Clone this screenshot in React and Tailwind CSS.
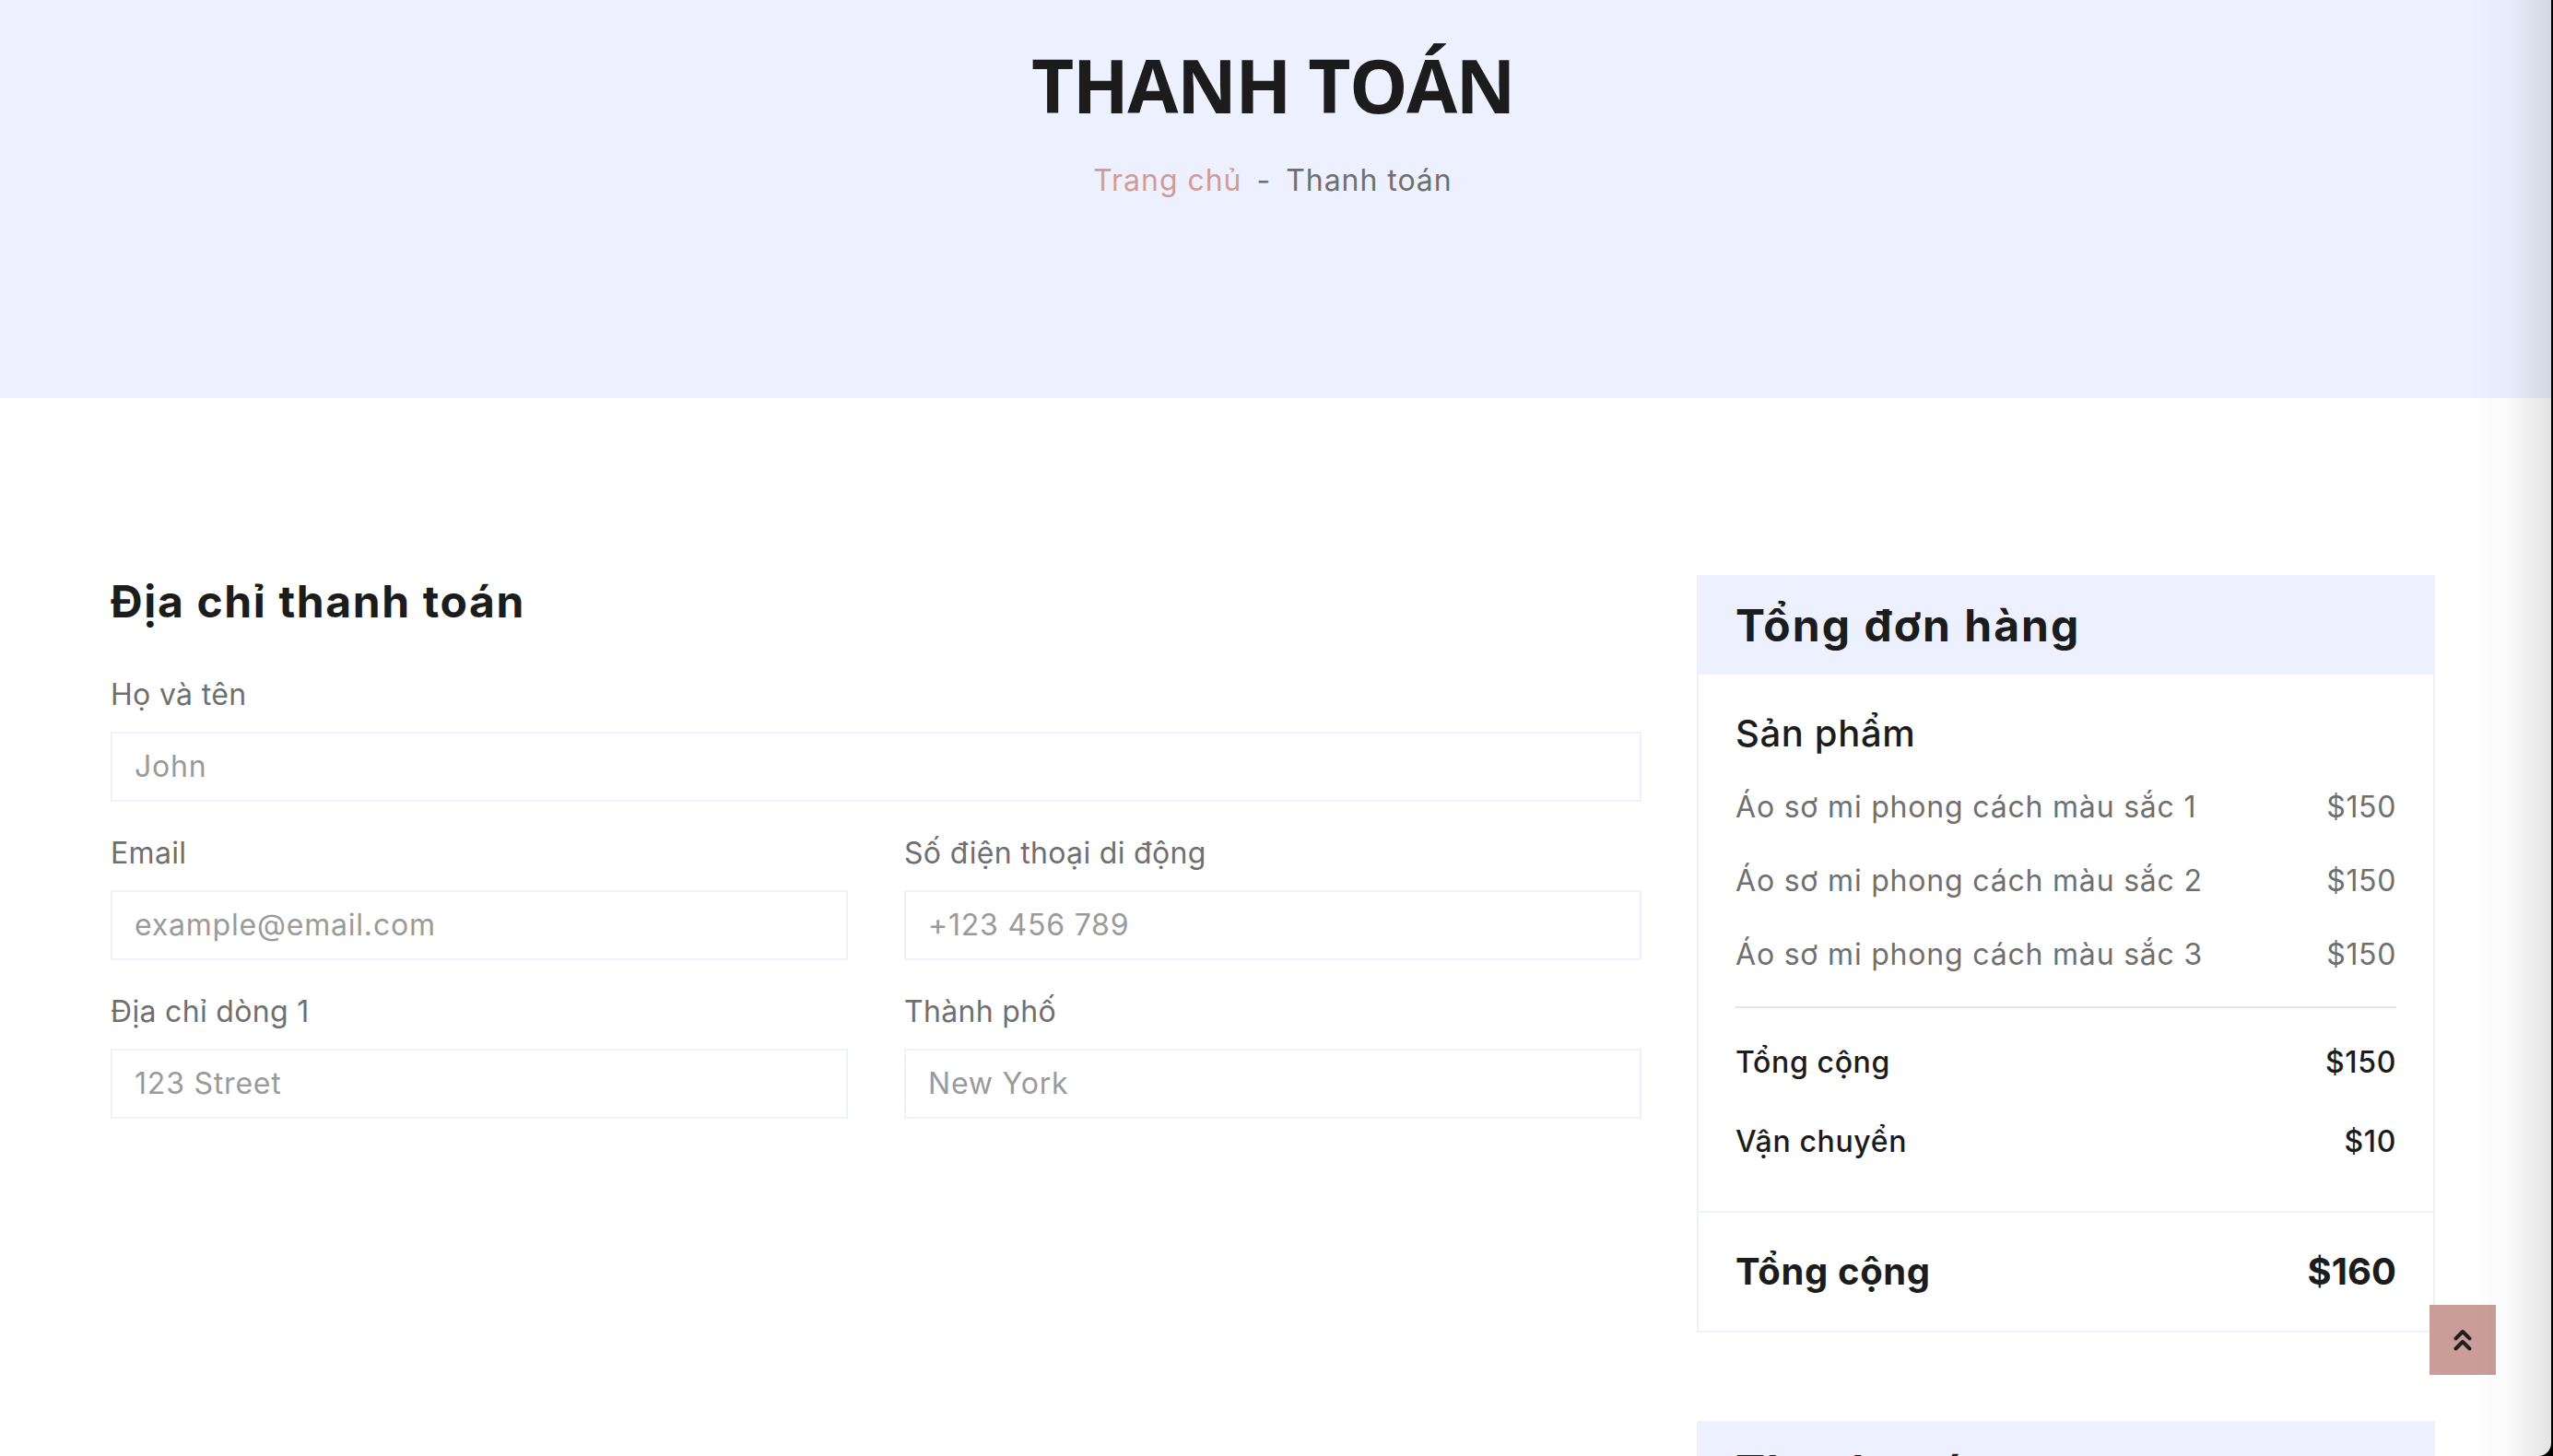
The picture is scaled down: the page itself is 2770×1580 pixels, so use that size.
import React from "react";

function Field({ label, placeholder, wide }) {
  return (
    <div className={wide ? "col-span-2" : ""}>
      <label className="block mb-[16px] leading-[48px] tracking-[0.01em]">{label}</label>
      <input
        type="text"
        placeholder={placeholder}
        className="block w-full h-[76px] border-2 border-[#EDF1FF] bg-white px-[24px] text-[32px] leading-[48px] tracking-[0.025em] text-[#495057] placeholder:text-[#9A9A9A] outline-none"
      />
    </div>
  );
}

function AngleDoubleUp() {
  return (
    <svg width="20" height="25" viewBox="0 0 20 25" fill="none">
      <polyline points="2.5,10.5 10,3 17.5,10.5" stroke="#1F1F1F" strokeWidth="4" strokeLinecap="round" strokeLinejoin="round" />
      <polyline points="2.5,21.5 10,14 17.5,21.5" stroke="#1F1F1F" strokeWidth="4" strokeLinecap="round" strokeLinejoin="round" />
    </svg>
  );
}

const items = [
  "Áo sơ mi phong cách màu sắc 1",
  "Áo sơ mi phong cách màu sắc 2",
  "Áo sơ mi phong cách màu sắc 3",
];

export default function App() {
  return (
    <div className="w-[2770px] h-[1580px] bg-black overflow-hidden">
      <div className="relative w-[2768px] h-[1580px] bg-white rounded-br-[14px] overflow-hidden font-['Inter','Open_Sans',sans-serif] text-[32px] leading-[1.5] tracking-[0.02em] text-[#6F6F6F]">
        <header className="h-[432px] bg-[#EDF1FF] pt-[44px] pl-[120px] pr-[126px] flex flex-col items-center">
          <h1 className="text-[80px] leading-[96px] font-bold tracking-[-0.02em] text-[#1C1C1C] mb-[32px] font-['Open_Sans',sans-serif]">
            THANH TOÁN
          </h1>
          <div className="flex leading-[48px] tracking-[0.03em]">
            <a href="#" className="text-[#D19C97]">Trang chủ</a>
            <span className="px-[16px]">-</span>
            <span>Thanh toán</span>
          </div>
        </header>

        <main className="pt-[192px] pl-[120px] pr-[126px] grid grid-cols-[1661px_801px] gap-x-[60px] items-start">
          <section>
            <h4 className="text-[48px] leading-[57.6px] font-bold tracking-[0.034em] text-[#1C1C1C] mb-[48px]">
              Địa chỉ thanh toán
            </h4>
            <div className="grid grid-cols-2 gap-x-[61px] gap-y-[32px]">
              <Field wide label="Họ và tên" placeholder="John" />
              <Field label="Email" placeholder="example@email.com" />
              <Field label="Số điện thoại di động" placeholder="+123 456 789" />
              <Field label="Địa chỉ dòng 1" placeholder="123 Street" />
              <Field label="Thành phố" placeholder="New York" />
            </div>
          </section>

          <aside>
            <div className="border-2 border-[#EDF1FF] mb-[96px]">
              <div className="bg-[#EDF1FF] px-[40px] py-[24px]">
                <h4 className="text-[48px] leading-[57.6px] font-bold tracking-[0.042em] text-[#1C1C1C]">Tổng đơn hàng</h4>
              </div>
              <div className="p-[40px]">
                <h5 className="text-[40px] leading-[48px] font-medium text-[#1C1C1C] mb-[32px]">Sản phẩm</h5>
                {items.map((name) => (
                  <div key={name} className="flex justify-between">
                    <p className="mb-[32px] tracking-[0.025em]">{name}</p>
                    <p className="mb-[32px]">$150</p>
                  </div>
                ))}
                <div className="h-[2px] bg-[#E5E5E5] mb-[32px]" />
                <div className="flex justify-between pt-[8px] mb-[32px]">
                  <h6 className="text-[32px] leading-[38.4px] font-medium text-[#1C1C1C] mb-[16px]">Tổng cộng</h6>
                  <h6 className="text-[32px] leading-[38.4px] font-medium text-[#1C1C1C] mb-[16px]">$150</h6>
                </div>
                <div className="flex justify-between">
                  <h6 className="text-[32px] leading-[38.4px] font-medium text-[#1C1C1C] mb-[16px]">Vận chuyển</h6>
                  <h6 className="text-[32px] leading-[38.4px] font-medium text-[#1C1C1C] mb-[16px]">$10</h6>
                </div>
              </div>
              <div className="border-t-2 border-[#EDF1FF] px-[40px] py-[24px]">
                <div className="flex justify-between mt-[16px]">
                  <h5 className="text-[40px] leading-[48px] font-bold text-[#1C1C1C] mb-[16px]">Tổng cộng</h5>
                  <h5 className="text-[40px] leading-[48px] font-bold tracking-normal text-[#1C1C1C] mb-[16px]">$160</h5>
                </div>
              </div>
            </div>

            <div className="border-2 border-[#EDF1FF]">
              <div className="bg-[#EDF1FF] px-[40px] py-[24px]">
                <h4 className="text-[48px] leading-[57.6px] font-bold tracking-[0.034em] text-[#1C1C1C]">Thanh toán</h4>
              </div>
              <div className="p-[40px] h-[300px]" />
            </div>
          </aside>
        </main>

        <a
          href="#"
          className="absolute left-[2636px] top-[1416px] w-[72px] h-[76px] bg-[#CB9D98] flex items-center justify-center"
        >
          <AngleDoubleUp />
        </a>

        <div className="pointer-events-none absolute top-0 right-0 h-full w-[88px] bg-[linear-gradient(to_right,rgba(0,0,0,0),rgba(0,0,0,0.025)_50%,rgba(0,0,0,0.11))]" />
      </div>
    </div>
  );
}
